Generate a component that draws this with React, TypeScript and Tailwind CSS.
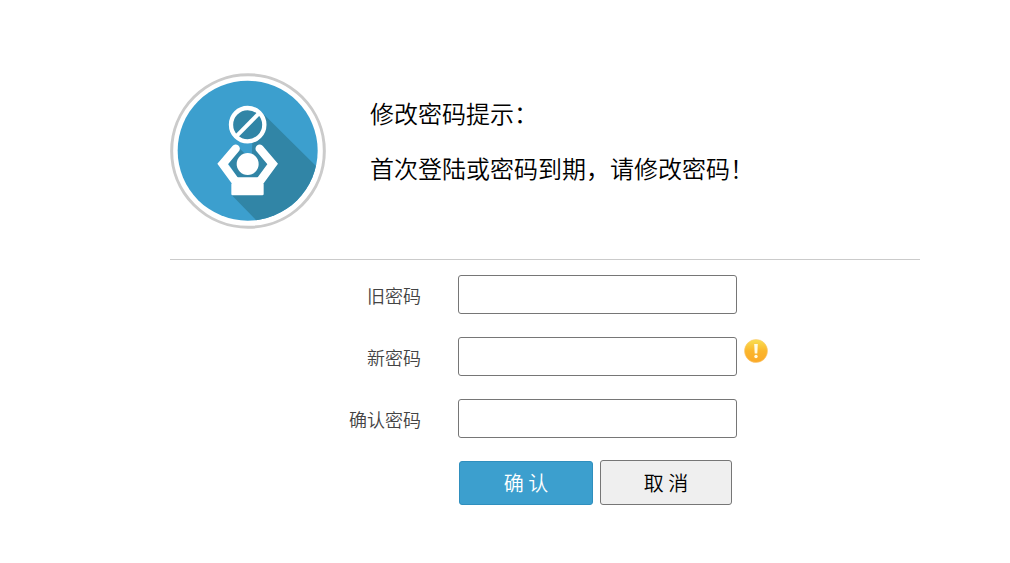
import React from 'react';

const NoticeIcon: React.FC = () => (
  <svg className="w-[156px] h-[156px] shrink-0" viewBox="15 15 468 468" aria-hidden="true">
    <defs>
      <clipPath id="disc">
        <circle cx="248" cy="248" r="210" />
      </clipPath>
    </defs>
    <circle cx="249" cy="249" r="229" fill="#fff" stroke="#cbcbcb" strokeWidth="9" />
    <circle cx="248" cy="248" r="210" fill="#3c9fce" />
    {/* Sombra larga */}
    <g clipPath="url(#disc)" fill="#3185a6">
      <path d="M287 130 L480 321 L480 480 L296 480 L202 383 L225 340 L192 288 L218 242 L232 242 L260 268 L262 222 Z" />
      <path d="M218 242 L192 288 L225 335 L280 300 L240 262 Z" />
      <circle cx="248" cy="170" r="50" />
    </g>
    <path d="M216 222 L232 222 L258 250 L248 257 L238 255 L218 236 Z" fill="#3c9fce" />
    {/* Señal de prohibido */}
    <circle cx="248" cy="170" r="50" fill="none" stroke="#fff" strokeWidth="13" />
    <path d="M213 206 L284 134" stroke="#fff" strokeWidth="12" />
    {/* Persona */}
    <circle cx="248" cy="288" r="33" fill="#fff" />
    <path
      d="M212 242 L173 288 L210 338 M284 242 L323 288 L286 338"
      fill="none"
      stroke="#fff"
      strokeWidth="25"
      strokeLinecap="round"
      strokeLinejoin="miter"
    />
    <path d="M199 348 L214 328 H282 L296 348 V378 Q296 382 292 382 H203 Q199 382 199 378 Z" fill="#fff" />
  </svg>
);

const WarningIcon: React.FC = () => (
  <svg className="w-6 h-6 mt-[2px] ml-[7px] shrink-0" viewBox="0 0 24 24" role="img" aria-label="提示">
    <defs>
      <linearGradient id="amber" x1="0" y1="0" x2="0" y2="1">
        <stop offset="0" stopColor="#f8e052" />
        <stop offset="0.5" stopColor="#fbb62c" />
        <stop offset="1" stopColor="#fba928" />
      </linearGradient>
    </defs>
    <circle cx="12" cy="12" r="11.5" fill="url(#amber)" stroke="#fbc977" strokeWidth="0.6" />
    <path d="M10.2 5 H13.8 L13.3 14.6 H10.7 Z" fill="#fffbe5" />
    <circle cx="12" cy="17.5" r="1.7" fill="#fffbe5" />
  </svg>
);

const FIELDS = [
  { id: 'oldPassword', label: '旧密码', warning: false },
  { id: 'newPassword', label: '新密码', warning: true },
  { id: 'confirmPassword', label: '确认密码', warning: false },
];

const App: React.FC = () => {
  return (
    <div className="min-h-screen bg-white pt-[73px] pl-[170px] pr-[90px] pb-10 font-['Noto_Sans_CJK_SC',sans-serif] font-[350] text-black">
      <header className="flex gap-11 border-b border-[#cbcbcb] pb-[30px]">
        <NoticeIcon />
        <div className="pt-[22px] text-2xl leading-9">
          <h1 className="font-[350]">修改密码提示：</h1>
          <p className="mt-[19px]">首次登陆或密码到期，请修改密码！</p>
        </div>
      </header>

      <form className="pt-[15px]" onSubmit={(e) => e.preventDefault()}>
        <div className="flex flex-col gap-[23px]">
          {FIELDS.map((field) => (
            <div key={field.id} className="flex items-start">
              <label
                htmlFor={field.id}
                className="w-[251px] mr-[37px] text-right text-lg leading-10 h-[39px] text-[#444]"
              >
                {field.label}
              </label>
              <input
                id={field.id}
                type="password"
                className="w-[279px] h-[39px] px-2 text-lg border border-[#767676] rounded-[3px] bg-white"
              />
              {field.warning && <WarningIcon />}
            </div>
          ))}
        </div>

        <div className="mt-[22px] ml-[289px] flex items-end gap-[7px] text-xl">
          <button type="submit" className="w-[134px] h-11 rounded-[3px] border border-[#2f8fbe] bg-[#3c9fce] text-white">
            确 认
          </button>
          <button type="button" className="w-[132px] h-[45px] rounded-[3px] border border-[#767676] bg-[#efefef]">
            取 消
          </button>
        </div>
      </form>
    </div>
  );
};

export default App;
